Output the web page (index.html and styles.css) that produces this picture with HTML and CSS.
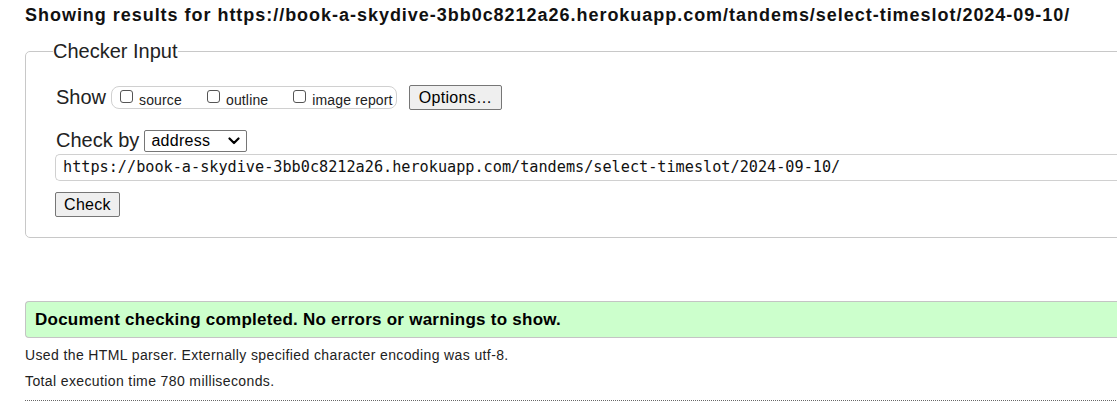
FILE: index.html
```html
<!DOCTYPE html>
<html lang="en">
<head>
<meta charset="utf-8">
<title>Nu Html Checker</title>
<link rel="stylesheet" href="styles.css">
</head>
<body>
<div class="page">
  <h2 class="results-title">Showing results for https://book-a-skydive-3bb0c8212a26.herokuapp.com/tandems/select-timeslot/2024-09-10/</h2>
  <form class="checker-form">
    <fieldset class="checker">
      <legend class="checker-legend">Checker Input</legend>
      <div class="row show-row">
        <span class="row-label">Show</span>
        <span class="toggles">
          <label class="toggle"><input type="checkbox" class="cb"><span>source</span></label>
          <label class="toggle"><input type="checkbox" class="cb"><span>outline</span></label>
          <label class="toggle"><input type="checkbox" class="cb"><span>image report</span></label>
        </span>
        <button type="button" class="btn options-btn">Options…</button>
      </div>
      <div class="row checkby-row">
        <span class="row-label">Check by</span>
        <span class="select">
          <span class="select-text">address</span>
          <svg class="chev" width="12" height="8" viewBox="0 0 12 8"><path d="M1.5 1.5 L6 6 L10.5 1.5" fill="none" stroke="#000" stroke-width="2.2" stroke-linecap="round" stroke-linejoin="round"/></svg>
        </span>
      </div>
      <div class="url-input">https://book-a-skydive-3bb0c8212a26.herokuapp.com/tandems/select-timeslot/2024-09-10/</div>
      <div class="row">
        <button type="button" class="btn check-btn">Check</button>
      </div>
    </fieldset>
  </form>
  <p class="success">Document checking completed. No errors or warnings to show.</p>
  <p class="details">Used the HTML parser. Externally specified character encoding was utf-8.</p>
  <p class="details">Total execution time 780 milliseconds.</p>
  <hr class="dotted">
</div>
</body>
</html>
```
FILE: styles.css
```css
html, body {
  margin: 0;
  padding: 0;
  background: #fff;
  overflow: hidden;
}
body {
  font-family: "Liberation Sans", Arial, sans-serif;
  color: #222;
}
.page {
  width: 1300px;
  padding-left: 25px;
  box-sizing: border-box;
}
.results-title {
  margin: 0;
  padding-top: 4px;
  font-size: 18px;
  line-height: 22px;
  font-weight: bold;
  letter-spacing: 0.97px;
  color: #111;
  white-space: nowrap;
}
.checker-form {
  margin: 14px 0 0 0;
}
.checker {
  margin: 0;
  border: 1px solid #c8c8c8;
  border-radius: 5px;
  padding: 22px 0 20px 30px;
  display: flex;
  flex-direction: column;
}
.checker-legend {
  font-size: 20px;
  line-height: 23px;
  padding: 0;
  margin-left: -3px;
  color: #222;
}
.row {
  display: flex;
  align-items: center;
}
.row-label {
  font-size: 20px;
  line-height: 23px;
  color: #222;
  white-space: nowrap;
}
.show-row {
  height: 25px;
}
.toggles {
  display: flex;
  align-items: center;
  flex-shrink: 0;
  margin-left: 5px;
  width: 286px;
  height: 23px;
  box-sizing: border-box;
  border: 1px solid #d0d0d0;
  border-radius: 8px;
  padding: 0 7px 0 8px;
}
.toggle {
  display: flex;
  align-items: center;
  flex-shrink: 0;
  white-space: nowrap;
  font-size: 14px;
  letter-spacing: 0.15px;
  color: #222;
  margin-right: 25px;
}
.toggle:last-child {
  margin-right: 0;
}
.cb {
  appearance: none;
  -webkit-appearance: none;
  flex-shrink: 0;
  width: 13px;
  height: 13px;
  margin: 0 6px 2px 0;
  border: 1px solid #555;
  border-radius: 3px;
  background: #fff;
  box-sizing: border-box;
}
.toggle span {
  position: relative;
  top: 2px;
}
.btn {
  font-family: "Liberation Sans", Arial, sans-serif;
  font-size: 16px;
  letter-spacing: 0.3px;
  color: #000;
  background: #efefef;
  border: 1px solid #767676;
  border-radius: 2px;
  padding: 0 8px;
  height: 25px;
  line-height: 21px;
  flex-shrink: 0;
  white-space: nowrap;
}
.options-btn {
  margin-left: 12px;
  width: 93px;
}
.checkby-row {
  margin-top: 19px;
  height: 23px;
}
.select {
  display: flex;
  align-items: center;
  justify-content: space-between;
  margin-left: 5px;
  width: 103px;
  height: 22px;
  box-sizing: border-box;
  border: 1px solid #767676;
  border-radius: 2px;
  padding: 0 6px 0 6px;
  font-size: 16px;
  letter-spacing: 0.3px;
  color: #000;
}
.select-text {
  line-height: 18px;
}
.chev {
  display: block;
}
.url-input {
  margin-top: 2px;
  height: 27px;
  box-sizing: border-box;
  border: 1px solid #d0d0d0;
  border-right: none;
  border-radius: 5px 0 0 5px;
  margin-left: -1px;
  padding: 0 0 0 7px;
  font-family: "DejaVu Sans Mono", "Liberation Mono", monospace;
  font-size: 15.2px;
  line-height: 25px;
  color: #111;
  white-space: nowrap;
}
.check-btn {
  margin-top: 11px;
  margin-left: -1px;
  width: 65px;
  padding: 0;
}
.success {
  margin: 63px 0 0 0;
  height: 37px;
  box-sizing: border-box;
  background: #ccffcc;
  border: 1px solid #c4c4c4;
  border-right: none;
  border-radius: 4px 0 0 4px;
  padding-left: 9px;
  font-size: 17px;
  font-weight: bold;
  letter-spacing: 0.25px;
  line-height: 35px;
  color: #000;
}
.details {
  margin: 8px 0 0 0;
  font-size: 14px;
  letter-spacing: 0.38px;
  line-height: 18px;
  color: #222;
}
.details + .details {
  margin-top: 8px;
}
.dotted {
  margin: 10px 0 0 0;
  border: none;
  border-top: 1px dotted #666;
  height: 0;
}
```
